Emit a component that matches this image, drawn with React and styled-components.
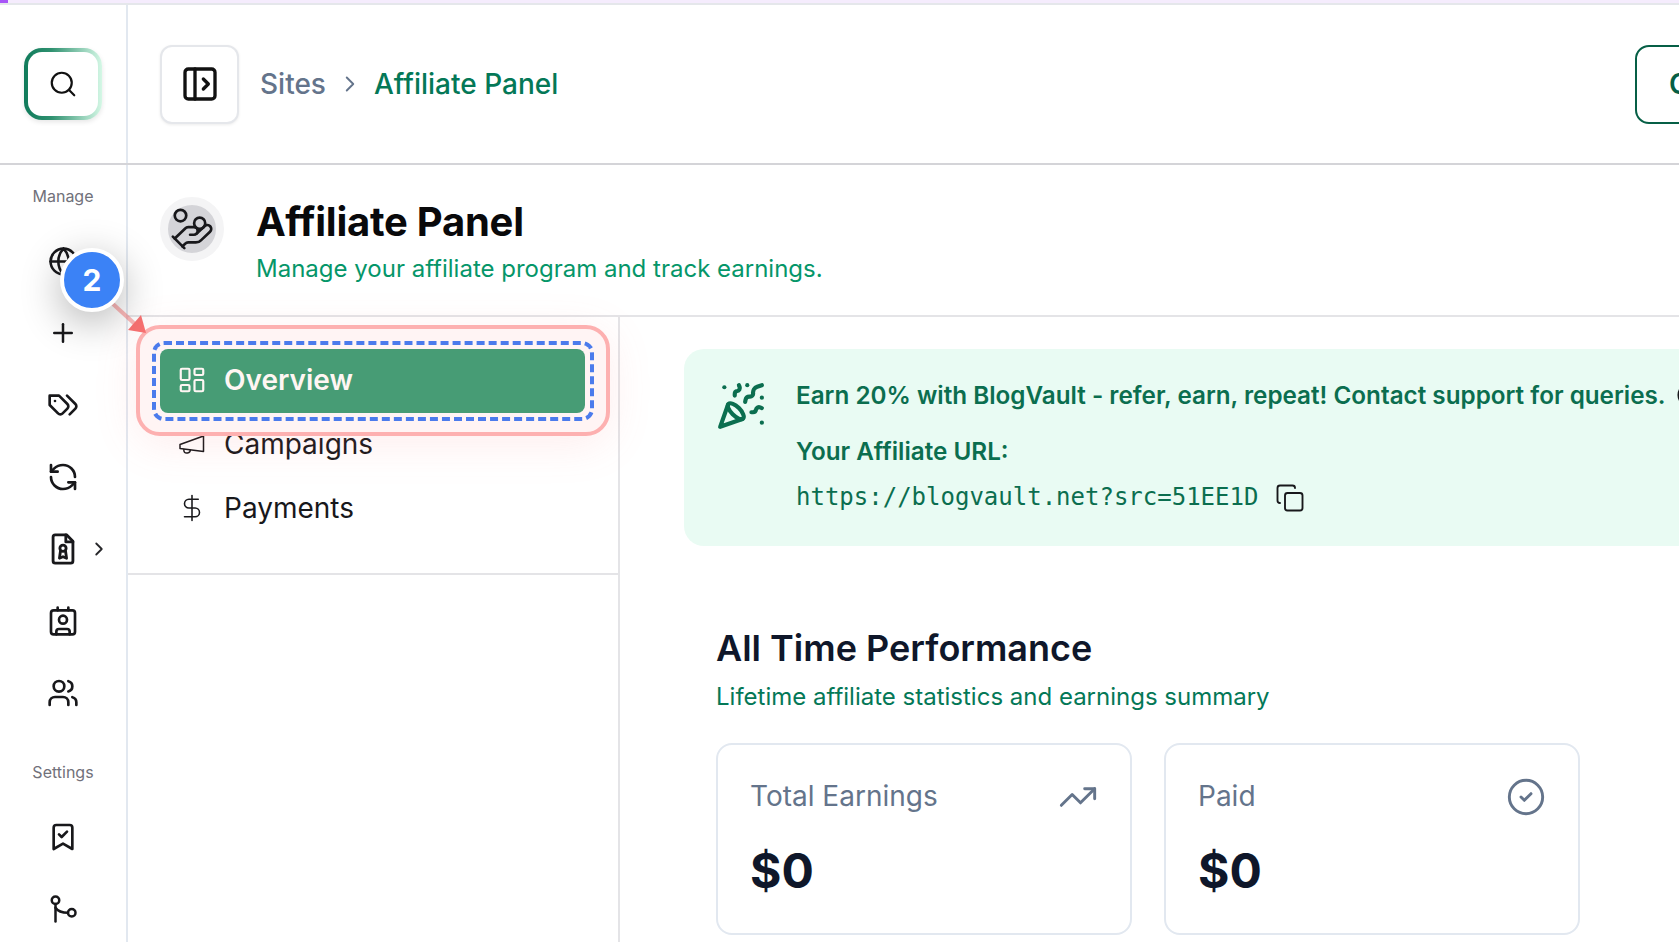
import React from "react";
import styled, { createGlobalStyle } from "styled-components";
import {
  Search, PanelLeftOpen, ChevronRight, Globe, Plus, RefreshCcw, Contact, Users,
  BookmarkCheck, LayoutDashboard, DollarSign, PartyPopper, Copy, TrendingUp, CircleCheck, HandCoins, Info,
} from "lucide-react";

const Global = createGlobalStyle`
  html, body { margin: 0; padding: 0; background: #fff; overflow: hidden; }
  * { box-sizing: border-box; }
  body { font-family: Inter, "Liberation Sans", sans-serif; }
`;

const Page = styled.div`
  position: relative;
  width: 1679px;
  height: 942px;
  overflow: hidden;
  display: flex;
  flex-direction: column;
  background: #fff;
`;
const TopStrip = styled.div`
  height: 5px;
  flex: none;
  background: #f5ecfd;
  border-bottom: 2px solid #e5e7eb;
`;
const Progress = styled.div`
  width: 8px;
  height: 3px;
  background: #a855f7;
`;
const Shell = styled.div`
  flex: 1;
  min-height: 0;
  display: flex;
`;
const Sidebar = styled.aside`
  width: 128px;
  flex: none;
  border-right: 2px solid #e2e8f0;
  display: flex;
  flex-direction: column;
`;
const LogoArea = styled.div`
  height: 160px;
  flex: none;
  display: flex;
  align-items: center;
  justify-content: center;
  border-bottom: 2px solid #d4d4d8;
  margin-right: -2px;
  padding-right: 2px;
`;
const SearchButton = styled.button`
  width: 78px;
  height: 72px;
  padding: 0;
  border: 4px solid transparent;
  border-radius: 18px;
  background: linear-gradient(#fff, #fff) padding-box, linear-gradient(90deg, #0f7a5a 0%, #2f9170 35%, #d5f8e6 100%) border-box;
  box-shadow: 0 2px 5px rgba(0, 0, 0, 0.1);
  display: flex;
  align-items: center;
  justify-content: center;
  color: #111;
`;
const SideNav = styled.nav`
  display: flex;
  flex-direction: column;
  padding-top: 21px;
`;
const SideLabel = styled.div`
  height: 20px;
  line-height: 20px;
  text-align: center;
  font-size: 16px;
  color: #71717a;
  margin-top: ${(p) => p.$top || 0}px;
  margin-bottom: ${(p) => p.$bottom || 0}px;
`;
const SideItem = styled.div`
  height: 72px;
  display: grid;
  grid-template-columns: 1fr auto 1fr;
  align-items: center;
  justify-items: center;
  color: #18181b;
`;
const SideChevron = styled.div`
  justify-self: start;
  margin-left: 8px;
  display: flex;
  color: #27272a;
`;
const Main = styled.main`
  flex: 1;
  min-width: 0;
  display: flex;
  flex-direction: column;
`;
const Header = styled.header`
  height: 160px;
  flex: none;
  display: flex;
  align-items: center;
  padding-left: 32px;
  border-bottom: 2px solid #d4d4d8;
`;
const ToggleButton = styled.button`
  width: 79px;
  height: 79px;
  flex: none;
  padding: 0;
  border: 2px solid #e5e7eb;
  border-radius: 12px;
  background: #fff;
  box-shadow: 0 1px 3px rgba(0, 0, 0, 0.08);
  display: flex;
  align-items: center;
  justify-content: center;
  color: #111;
`;
const Crumbs = styled.div`
  display: flex;
  align-items: center;
  margin-left: 21px;
  font-size: 28px;
  font-weight: 500;
`;
const CrumbParent = styled.span`
  color: #64748b;
`;
const CrumbCurrent = styled.span`
  color: #047857;
`;
const CrumbSeparator = styled.span`
  display: flex;
  margin: 0 11px;
  color: #64748b;
`;
const HeaderAction = styled.button`
  margin-left: auto;
  margin-right: -90px;
  width: 134px;
  height: 79px;
  flex: none;
  border: 2px solid #065f46;
  border-radius: 14px;
  background: #fff;
  padding: 0 0 0 32px;
  text-align: left;
  white-space: nowrap;
  overflow: hidden;
  color: #065f46;
  font: 600 28px Inter, sans-serif;
`;
const PageHead = styled.div`
  height: 152px;
  flex: none;
  display: flex;
  padding: 32px 0 0 32px;
  border-bottom: 2px solid #e4e4e7;
`;
const IconHalo = styled.div`
  width: 64px;
  height: 64px;
  flex: none;
  border-radius: 50%;
  background: #d4d4d8;
  border: 8px solid #f4f4f5;
  display: flex;
  align-items: center;
  justify-content: center;
  color: #18181b;
`;
const HeadText = styled.div`
  margin: -1px 0 0 32px;
`;
const PageTitle = styled.h1`
  margin: 0;
  font-size: 40px;
  line-height: 52px;
  font-weight: 700;
  letter-spacing: -0.25px;
  color: #09090b;
`;
const PageSub = styled.p`
  margin: 6px 0 0;
  font-size: 24px;
  line-height: 30px;
  color: #059669;
`;
const Body = styled.div`
  flex: 1;
  min-height: 0;
  display: flex;
`;
const SubColumn = styled.div`
  width: 492px;
  flex: none;
  border-right: 2px solid #e4e4e7;
`;
const SubNav = styled.nav`
  padding: 32px 33px 32px 32px;
  border-bottom: 2px solid #e4e4e7;
`;
const SubItem = styled.div`
  height: 64px;
  display: flex;
  align-items: center;
  gap: 17px;
  padding: 0 0 2px 17px;
  border-radius: 8px;
  font-size: 28px;
  font-weight: ${(p) => (p.$active ? 600 : 400)};
  color: ${(p) => (p.$active ? "#fff6f3" : "#18181b")};
  background: ${(p) => (p.$active ? "#479c75" : "transparent")};
  position: ${(p) => (p.$active ? "relative" : "static")};
  z-index: ${(p) => (p.$active ? 2 : "auto")};
`;
const SubIcon = styled.span`
  width: 30px;
  height: 36px;
  display: flex;
  align-items: center;
  justify-content: center;
  flex: none;
`;
const OverlayBox = styled.div`
  position: absolute;
  left: 160px;
  top: 349px;
  width: 426px;
  height: 64px;
  pointer-events: none;
  z-index: 1;
`;
const RedFrame = styled.div`
  position: absolute;
  inset: -24px -24px -23px -24px;
  border: 4px solid #fdb0b0;
  border-radius: 24px;
  background: #fff4f4;
  box-shadow: 0 8px 44px rgba(248, 113, 113, 0.13);
`;
const DashFrame = styled.div`
  position: absolute;
  inset: -8px;
  border: 4px dashed #4b7bec;
  border-radius: 12px;
`;
const Content = styled.div`
  flex: 1;
  min-width: 0;
  padding: 32px 0 0 64px;
`;
const Banner = styled.section`
  width: 1100px;
  height: 197px;
  display: flex;
  gap: 34px;
  padding: 32px 34px;
  border-radius: 20px;
  background: #e9fbf3;
`;
const BannerIcon = styled.div`
  width: 44px;
  flex: none;
  color: #0b6e4f;
  display: flex;
  & > svg {
    flex: none;
    margin-left: -2px;
  }
`;
const BannerText = styled.div`
  display: flex;
  flex-direction: column;
  white-space: nowrap;
`;
const BannerLine = styled.div`
  display: flex;
  align-items: center;
  gap: 10px;
  height: 30px;
  padding-bottom: 2px;
  font-size: 24.26px;
  font-weight: 600;
  color: #0b6e4f;
  margin-top: ${(p) => p.$top || 0}px;
`;
const UrlLine = styled.div`
  display: flex;
  align-items: center;
  gap: 17px;
  height: 30px;
  margin-top: 16px;
`;
const Url = styled.code`
  font-family: "DejaVu Sans Mono", "Liberation Mono", monospace;
  font-size: 24px;
  line-height: 28px;
  margin-top: -2px;
  color: #0b6e4f;
`;
const Performance = styled.section`
  padding-left: 32px;
  margin-top: 80px;
`;
const SectionTitle = styled.h2`
  margin: 0;
  font-size: 36px;
  line-height: 44px;
  font-weight: 600;
  color: #0f172a;
`;
const SectionSub = styled.p`
  margin: 11px 0 0;
  font-size: 24px;
  line-height: 32px;
  color: #047857;
`;
const Cards = styled.div`
  display: flex;
  gap: 32px;
  margin-top: 30px;
`;
const Card = styled.article`
  width: 416px;
  height: 192px;
  border: 2px solid #e2e8f0;
  border-radius: 16px;
  padding: 34px 32px 0;
`;
const CardHead = styled.div`
  height: 36px;
  display: flex;
  align-items: center;
  justify-content: space-between;
  color: #64748b;
  font-size: 28px;
  & > svg {
    flex: none;
  }
`;
const CardLabel = styled.span`
  margin-top: -2px;
`;
const CardValue = styled.div`
  margin-top: 28px;
  font-size: 48px;
  line-height: 56px;
  font-weight: 700;
  color: #0f172a;
`;
const Pointer = styled.svg`
  position: absolute;
  left: 100px;
  top: 295px;
  z-index: 3;
`;
const StepBadge = styled.div`
  position: absolute;
  left: 60px;
  top: 248px;
  width: 64px;
  height: 64px;
  z-index: 4;
  border-radius: 50%;
  border: 4px solid #fff;
  background: #3b82f6;
  box-shadow: 0 10px 40px rgba(0, 0, 0, 0.3);
  color: #fff;
  font-size: 30px;
  font-weight: 700;
  display: flex;
  align-items: center;
  justify-content: center;
`;

const GitIcon = () => (
  <svg width="30" height="30" viewBox="0 0 24 24" fill="none" stroke="currentColor" strokeWidth="2" strokeLinecap="round">
    <circle cx="6" cy="5" r="3" />
    <circle cx="19" cy="15" r="3" />
    <path d="M6 8v14" />
    <path d="M6 11c2 3 5 4 10 4" />
  </svg>
);
const MegaphoneIcon = () => (
  <svg width="28" height="22" viewBox="0 0 28 22" fill="none" stroke="currentColor" strokeWidth="1.5" strokeLinejoin="round">
    <path d="M2 11.5 25.5 3v15.5L2 15.5z" />
    <path d="M6 16c-.8 3 1 4.5 3.5 4 2-.4 3-1.6 2.8-3.4" />
  </svg>
);
const TagsIcon = () => (
  <svg width="32" height="32" viewBox="0 0 24 24" fill="none" stroke="currentColor" strokeWidth="2" strokeLinecap="round" strokeLinejoin="round">
    <path d="M9 5H2v7l6.29 6.29c.94.94 2.48.94 3.42 0l3.58-3.58c.94-.94.94-2.48 0-3.42L9 5Z" />
    <path d="M6 9.01V9" />
    <path d="m15 5 6.3 6.3a2.4 2.4 0 0 1 0 3.4L17 19" />
  </svg>
);
const FileRibbonIcon = () => (
  <svg width="34" height="34" viewBox="0 0 24 24" fill="none" stroke="currentColor" strokeWidth="2" strokeLinecap="round" strokeLinejoin="round">
    <path d="M14.5 2H6.5a1.5 1.5 0 0 0-1.5 1.5v17A1.5 1.5 0 0 0 6.5 22h11a1.5 1.5 0 0 0 1.5-1.5V6.5z" />
    <path d="M14 2v5h5" />
    <circle cx="12" cy="11.5" r="2.2" />
    <path d="M10.2 13.5 9.5 18.5l2.5-1 2.5 1-.7-5" />
  </svg>
);

const sideTop = [
  <Globe size={31} strokeWidth={2} />,
  <Plus size={30} strokeWidth={2} />,
  <TagsIcon />,
  <RefreshCcw size={32} strokeWidth={2} />,
];
const sideBottom = [<Contact size={32} strokeWidth={2} />, <Users size={32} strokeWidth={2} />];

function Highlight() {
  return (
    <OverlayBox>
      <RedFrame />
      <DashFrame />
    </OverlayBox>
  );
}

export default function App() {
  return (
    <Page>
      <Global />
      <TopStrip>
        <Progress />
      </TopStrip>
      <Shell>
        <Sidebar>
          <LogoArea>
            <SearchButton aria-label="Search">
              <Search size={30} strokeWidth={1.75} />
            </SearchButton>
          </LogoArea>
          <SideNav>
            <SideLabel $bottom={19}>Manage</SideLabel>
            {sideTop.map((icon, i) => (
              <SideItem key={i}>
                <span />
                {icon}
              </SideItem>
            ))}
            <SideItem>
              <span />
              <FileRibbonIcon />
              <SideChevron>
                <ChevronRight size={22} strokeWidth={2} />
              </SideChevron>
            </SideItem>
            {sideBottom.map((icon, i) => (
              <SideItem key={i}>
                <span />
                {icon}
              </SideItem>
            ))}
            <SideLabel $top={33} $bottom={19}>Settings</SideLabel>
            <SideItem>
              <span />
              <BookmarkCheck size={32} strokeWidth={2} />
            </SideItem>
            <SideItem>
              <span />
              <GitIcon />
            </SideItem>
          </SideNav>
        </Sidebar>
        <Main>
          <Header>
            <ToggleButton aria-label="Toggle sidebar">
              <PanelLeftOpen size={40} strokeWidth={2} />
            </ToggleButton>
            <Crumbs>
              <CrumbParent>Sites</CrumbParent>
              <CrumbSeparator>
                <ChevronRight size={26} strokeWidth={1.75} />
              </CrumbSeparator>
              <CrumbCurrent>Affiliate Panel</CrumbCurrent>
            </Crumbs>
            <HeaderAction>Connect</HeaderAction>
          </Header>
          <PageHead>
            <IconHalo>
              <HandCoins size={46} strokeWidth={1.4} />
            </IconHalo>
            <HeadText>
              <PageTitle>Affiliate Panel</PageTitle>
              <PageSub>Manage your affiliate program and track earnings.</PageSub>
            </HeadText>
          </PageHead>
          <Body>
            <SubColumn>
              <SubNav>
                <SubItem $active>
                  <SubIcon>
                    <LayoutDashboard size={36} strokeWidth={1.75} />
                  </SubIcon>
                  Overview
                </SubItem>
                <SubItem>
                  <SubIcon>
                    <MegaphoneIcon />
                  </SubIcon>
                  Campaigns
                </SubItem>
                <SubItem>
                  <SubIcon>
                    <DollarSign size={36} strokeWidth={1.25} />
                  </SubIcon>
                  Payments
                </SubItem>
              </SubNav>
            </SubColumn>
            <Content>
              <Banner>
                <BannerIcon>
                  <PartyPopper size={50} strokeWidth={2} />
                </BannerIcon>
                <BannerText>
                  <BannerLine>
                    Earn 20% with BlogVault - refer, earn, repeat! Contact support for queries.
                    <Info size={28} strokeWidth={1.5} color="#18181b" />
                  </BannerLine>
                  <BannerLine $top={26}>Your Affiliate URL:</BannerLine>
                  <UrlLine>
                    <Url>https://blogvault.net?src=51EE1D</Url>
                    <Copy size={30} strokeWidth={1.5} color="#18181b" />
                  </UrlLine>
                </BannerText>
              </Banner>
              <Performance>
                <SectionTitle>All Time Performance</SectionTitle>
                <SectionSub>Lifetime affiliate statistics and earnings summary</SectionSub>
                <Cards>
                  <Card>
                    <CardHead>
                      <CardLabel>Total Earnings</CardLabel>
                      <TrendingUp size={40} strokeWidth={1.75} />
                    </CardHead>
                    <CardValue>$0</CardValue>
                  </Card>
                  <Card>
                    <CardHead>
                      <CardLabel>Paid</CardLabel>
                      <CircleCheck size={40} strokeWidth={1.75} />
                    </CardHead>
                    <CardValue>$0</CardValue>
                  </Card>
                </Cards>
              </Performance>
            </Content>
          </Body>
        </Main>
      </Shell>
      <Highlight />
      <Pointer width="50" height="42" viewBox="0 0 50 42">
        <path d="M13 9 36 30" stroke="#f87171" strokeOpacity="0.5" strokeWidth="4" />
        <path d="M46 38 28 35 41 20z" fill="#f87171" />
      </Pointer>
      <StepBadge>2</StepBadge>
    </Page>
  );
}
